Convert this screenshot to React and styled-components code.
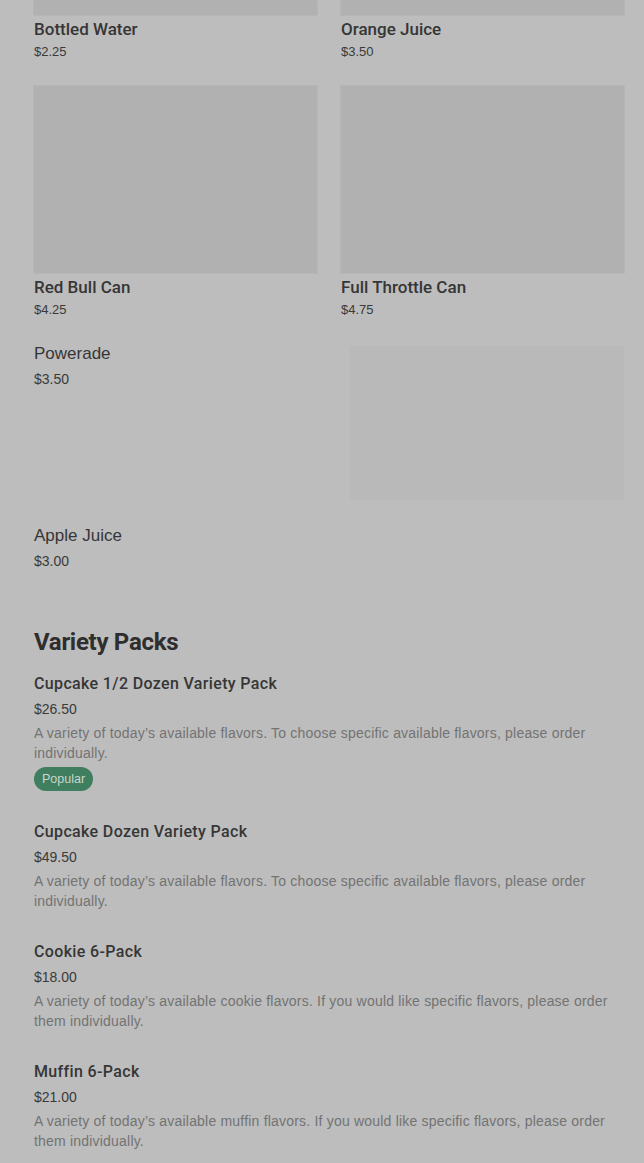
import styled, { createGlobalStyle } from "styled-components"

const GlobalStyle = createGlobalStyle`
    html, body {
        margin: 0;
        padding: 0;
        background: #bdbdbd;
    }
    * {
        box-sizing: border-box;
    }
`;

const Page = styled.main`
    width: 644px;
    min-height: 1163px;
    background: #bdbdbd;
    padding: 0 20px 40px 34px;
    margin-top: -172px;
    font-family: Roboto, "Liberation Sans", Arial, sans-serif;
    color: #303030;
`;

const Grid = styled.div`
    display: grid;
    grid-template-columns: 1fr 1fr;
    column-gap: 24px;
    row-gap: 25px;
`;

const Card = styled.div`
    display: flex;
    flex-direction: column;
`;

const CardImage = styled.div`
    height: 187px;
    background: #b1b1b1;
    box-shadow: 0 0 0 1px #b6b6b6;
    margin-bottom: 3px;
`;

const ItemTitle = styled.h3`
    margin: 0;
    font-family: ${props => props.$plain ? '"Liberation Sans", Arial, sans-serif' : 'Roboto, "Liberation Sans", sans-serif'};
    font-size: ${props => props.$size || 17}px;
    font-weight: ${props => props.$plain ? 400 : 500};
    line-height: ${props => props.$lh || 22}px;
    letter-spacing: ${props => props.$track || 0}px;
    color: #363636;
`;

const Price = styled.p`
    margin: ${props => props.$gap || 3}px 0 0;
    font-family: "Liberation Sans", Arial, sans-serif;
    font-size: ${props => props.$size || 14}px;
    line-height: ${props => props.$lh || 20}px;
    color: #3a3a3a;
`;

const ListRow = styled.div`
    display: flex;
    justify-content: space-between;
    align-items: flex-start;
    gap: 16px;
    margin-top: ${props => props.$top || 0}px;
`;

const RowText = styled.div`
    display: flex;
    flex-direction: column;
`;

const Thumb = styled.div`
    width: 274px;
    height: 154px;
    margin-top: 3px;
    background: #b9b9b9;
`;

const Section = styled.section`
    margin-top: 55px;
`;

const SectionTitle = styled.h2`
    margin: 0 0 14px;
    font-family: Roboto, "Liberation Sans", sans-serif;
    font-size: 24px;
    font-weight: 700;
    line-height: 32px;
    letter-spacing: -0.3px;
    color: #2e2e2e;
`;

const PackList = styled.div`
    display: flex;
    flex-direction: column;
    gap: 29px;
`;

const Pack = styled.div`
    display: flex;
    flex-direction: column;
    align-items: flex-start;
`;

const Description = styled.p`
    margin: 4px 0 0;
    font-family: "Liberation Sans", Arial, sans-serif;
    font-size: 14px;
    line-height: 20px;
    color: #737373;
    letter-spacing: 0.2px;
`;

const Badge = styled.span`
    margin-top: 4px;
    height: 24px;
    padding: 0 8px;
    display: inline-flex;
    align-items: center;
    border-radius: 12px;
    background: #3f7e5e;
    color: #c8d6cd;
    font-family: "Liberation Sans", Arial, sans-serif;
    font-size: 12.5px;
`;

const drinks = [
    { name: "Bottled Water", price: "$2.25" },
    { name: "Orange Juice", price: "$3.50" },
    { name: "Red Bull Can", price: "$4.25" },
    { name: "Full Throttle Can", price: "$4.75" },
];

const packs = [
    {
        name: "Cupcake 1/2 Dozen Variety Pack",
        price: "$26.50",
        desc: "A variety of today’s available flavors. To choose specific available flavors, please order individually.",
        badge: "Popular",
    },
    {
        name: "Cupcake Dozen Variety Pack",
        price: "$49.50",
        desc: "A variety of today’s available flavors. To choose specific available flavors, please order individually.",
    },
    {
        name: "Cookie 6-Pack",
        price: "$18.00",
        desc: "A variety of today’s available cookie flavors. If you would like specific flavors, please order them individually.",
    },
    {
        name: "Muffin 6-Pack",
        price: "$21.00",
        desc: "A variety of today’s available muffin flavors. If you would like specific flavors, please order them individually.",
    },
];

export default function App() {
    return (
        <>
            <GlobalStyle />
            <Page>
                <Grid>
                    {drinks.map(d => (
                        <Card key={d.name}>
                            <CardImage />
                            <ItemTitle>{d.name}</ItemTitle>
                            <Price $size={13} $lh={18}>{d.price}</Price>
                        </Card>
                    ))}
                </Grid>

                <ListRow $top={24}>
                    <RowText>
                        <ItemTitle $plain>Powerade</ItemTitle>
                        <Price $gap={4}>$3.50</Price>
                    </RowText>
                    <Thumb />
                </ListRow>

                <ListRow $top={25}>
                    <RowText>
                        <ItemTitle $plain>Apple Juice</ItemTitle>
                        <Price $gap={4}>$3.00</Price>
                    </RowText>
                </ListRow>

                <Section>
                    <SectionTitle>Variety Packs</SectionTitle>
                    <PackList>
                        {packs.map(p => (
                            <Pack key={p.name}>
                                <ItemTitle $size={16} $lh={24} $track={0.35}>{p.name}</ItemTitle>
                                <Price>{p.price}</Price>
                                <Description>{p.desc}</Description>
                                {p.badge && <Badge>{p.badge}</Badge>}
                            </Pack>
                        ))}
                    </PackList>
                </Section>
            </Page>
        </>
    )
}
